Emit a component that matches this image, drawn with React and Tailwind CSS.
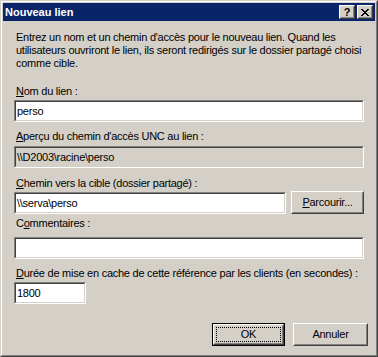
const font = { fontFamily: '"Liberation Sans", Arial, sans-serif' };

const Sunken = ({ className = "", bg = "bg-white", children }) => (
  <div
    className={`border border-t-[#808080] border-l-[#808080] border-b-white border-r-white ${className}`}
  >
    <div
      className={`flex h-full items-center border border-t-[#404040] border-l-[#404040] border-b-[#d4d0c8] border-r-[#d4d0c8] pl-px ${bg}`}
    >
      {children}
    </div>
  </div>
);

const Raised = ({ className = "", children }) => (
  <div
    className={`border border-t-white border-l-white border-b-[#404040] border-r-[#404040] ${className}`}
  >
    <div className="flex h-full items-center justify-center border border-t-[#d4d0c8] border-l-[#d4d0c8] border-b-[#808080] border-r-[#808080] bg-[#d4d0c8]">
      {children}
    </div>
  </div>
);

const Label = ({ pre = "", u, post, className = "" }) => (
  <div className={`h-[13px] whitespace-nowrap leading-[13px] ${className}`}>
    {pre}
    <span className="underline underline-offset-[1px]">{u}</span>
    {post}
  </div>
);

export default function App() {
  return (
    <div
      className="h-[357px] w-[378px] border border-t-[#d4d0c8] border-l-[#d4d0c8] border-b-[#404040] border-r-[#404040] text-[11px] tracking-[-0.25px] text-black"
      style={font}
    >
      <div className="h-full border border-t-white border-l-white border-b-[#808080] border-r-[#808080] bg-[#d4d0c8] p-px">
        {/* title bar */}
        <div className="flex h-[18px] items-center bg-[#0a246a] pl-[2px] pr-[2px]">
          <span className="flex-1 text-[11px] font-bold tracking-normal text-white">Nouveau lien</span>
          <Raised className="h-[14px] w-[16px]">
            <span className="text-[11px] font-bold leading-none">?</span>
          </Raised>
          <Raised className="ml-[2px] h-[14px] w-[16px]">
            <svg width="8" height="7" viewBox="0 0 8 7" shapeRendering="crispEdges">
              <path d="M0 0h2v1h-2zM6 0h2v1h-2zM1 1h2v1h-2zM5 1h2v1h-2zM2 2h4v1h-4zM3 3h2v1h-2zM2 4h4v1h-4zM1 5h2v1h-2zM5 5h2v1h-2zM0 6h2v1h-2zM6 6h2v1h-2z" fill="#000" />
            </svg>
          </Raised>
        </div>

        {/* body */}
        <div className="flex flex-col pl-[11px]">
          <p className="mt-[10px] whitespace-nowrap pl-[2px] leading-[13px]">
            Entrez un nom et un chemin d'accès pour le nouveau lien. Quand les
            <br />
            utilisateurs ouvriront le lien, ils seront redirigés sur le dossier partagé choisi
            <br />
            comme cible.
          </p>

          <Label className="mt-[15px] pl-[2px]" u="N" post="om du lien :" />
          <Sunken className="mt-[2px] h-[22px] w-[350px]">perso</Sunken>

          <Label className="mt-[8px] pl-[2px]" u="A" post="perçu du chemin d'accès UNC au lien :" />
          <Sunken className="mt-[3px] h-[22px] w-[350px]" bg="bg-[#d4d0c8]">
            \\D2003\racine\perso
          </Sunken>

          <Label className="mt-[9px] pl-[2px]" u="C" post="hemin vers la cible (dossier partagé) :" />
          <div className="mt-px flex h-[23px] items-start">
            <Sunken className="mt-px h-[22px] w-[272px]">\\serva\perso</Sunken>
            <Raised className="ml-[5px] h-[23px] w-[73px]">
              <Label u="P" post="arcourir..." />
            </Raised>
          </div>

          <Label className="mt-[3px] pl-[2px]" pre="C" u="o" post="mmentaires :" />
          <Sunken className="mt-[7px] h-[22px] w-[350px]" />

          <Label
            className="mt-[8px] pl-[2px]"
            u="D"
            post="urée de mise en cache de cette référence par les clients (en secondes) :"
          />
          <Sunken className="mt-[2px] h-[22px] w-[72px]">1800</Sunken>

          <div className="mt-[19px] flex justify-end pr-[7px]">
            <div className="h-[23px] w-[73px] border border-black">
              <div className="h-full border border-t-white border-l-white border-b-[#404040] border-r-[#404040]">
                <div className="flex h-full items-center justify-center border border-t-[#d4d0c8] border-l-[#d4d0c8] border-b-[#808080] border-r-[#808080] p-px">
                  <div className="flex h-full w-full items-center justify-center border border-dotted border-black">
                    OK
                  </div>
                </div>
              </div>
            </div>
            <Raised className="ml-[8px] h-[23px] w-[75px]">Annuler</Raised>
          </div>
        </div>
      </div>
    </div>
  );
}
